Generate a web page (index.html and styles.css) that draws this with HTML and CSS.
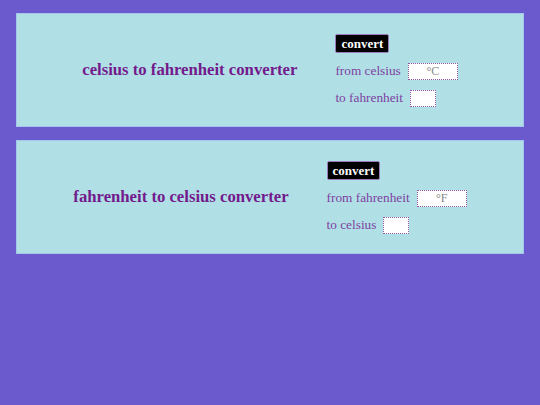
FILE: index.html
```html
<!DOCTYPE html>
<html lang="en">
<head>
<meta charset="utf-8">
<title>temperature converters</title>
<link rel="stylesheet" href="styles.css">
</head>
<body>
<main class="page">
  <section class="card">
    <h2 class="title">celsius to fahrenheit converter</h2>
    <form class="form">
      <button type="button" class="btn">convert</button>
      <div class="row"><label class="label">from celsius</label><input class="field wide" placeholder="°C"></div>
      <div class="row"><label class="label">to fahrenheit</label><input class="field narrow"></div>
    </form>
  </section>
  <section class="card">
    <h2 class="title">fahrenheit to celsius converter</h2>
    <form class="form">
      <button type="button" class="btn">convert</button>
      <div class="row"><label class="label">from fahrenheit</label><input class="field wide" placeholder="°F"></div>
      <div class="row"><label class="label">to celsius</label><input class="field narrow"></div>
    </form>
  </section>
</main>
</body>
</html>
```

FILE: styles.css
```css
html, body {
  margin: 0;
  padding: 0;
  background: #6a5acd;
  font-family: "Liberation Serif", "Times New Roman", serif;
}
.page {
  display: flex;
  flex-direction: column;
  gap: 13px;
  padding: 13px 16px;
}
.card {
  background: #b0e0e6;
  border: 1px solid #a4c6ea;
  height: 112px;
  display: flex;
  align-items: center;
  justify-content: center;
  gap: 38px;
}
.title {
  margin: 0;
  font-family: "Liberation Serif", "Times New Roman", serif;
  font-size: 16.7px;
  font-weight: bold;
  color: #731a8c;
}
.form {
  display: flex;
  flex-direction: column;
  align-items: flex-start;
  gap: 10px;
  margin: 0;
}
.btn {
  box-sizing: border-box;
  background: #000;
  color: #fff;
  font-family: "Liberation Serif", "Times New Roman", serif;
  font-weight: bold;
  font-size: 13px;
  border: 1px solid #9a7ab8;
  border-radius: 2px;
  height: 19px;
  padding: 0 5px;
  line-height: 15px;
}
.row {
  display: flex;
  align-items: center;
  gap: 7px;
  height: 17px;
}
.label {
  font-family: "Liberation Serif", "Times New Roman", serif;
  font-size: 13.3px;
  color: #7e3fa0;
}
.field {
  box-sizing: border-box;
  height: 17px;
  background: #fff;
  border: 1px dotted #8e55aa;
  font-family: "Liberation Serif", "Times New Roman", serif;
  font-size: 12px;
  text-align: center;
  padding: 0;
}
.field::placeholder {
  color: #888;
}
.wide { width: 50px; }
.narrow { width: 26px; }
```
